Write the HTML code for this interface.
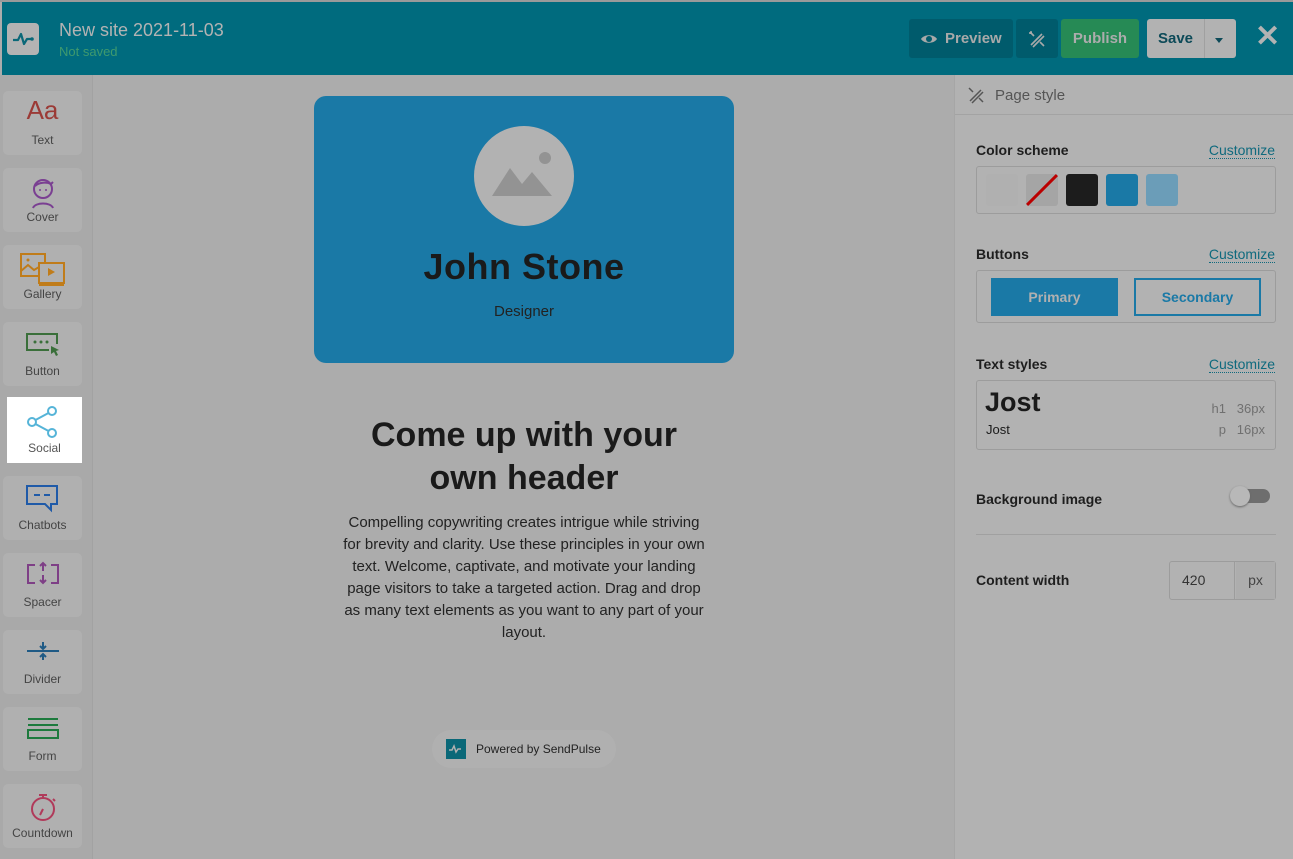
<!DOCTYPE html>
<html><head><meta charset="utf-8"><style>
*{box-sizing:border-box;margin:0;padding:0}
body{width:1293px;height:859px;overflow:hidden;background:#acacac;font-family:"Liberation Sans",sans-serif;position:relative}
.hdr{position:absolute;left:2px;top:2px;width:1291px;height:73px;background:#006b7e}
.abs{position:absolute}
.side{position:absolute;left:0;top:75px;width:93px;height:784px;background:#a9a9a9;border-right:1px solid #a2a2a2}
.tile{position:absolute;left:3px;width:79px;height:64px;background:#b0b0b0;border-radius:5px;text-align:center;font-size:12px;color:#444}
.tile svg{position:absolute;left:22px;top:8px}
.tile span{position:absolute;left:0;right:0;top:42px}
.panel{position:absolute;left:954px;top:75px;width:339px;height:784px;background:#b2b2b2;border-left:1px solid #a6a6a6}
.lbl{position:absolute;left:21px;font-size:14px;font-weight:bold;color:#1e1e1e}
.cust{position:absolute;right:18px;font-size:14px;color:#0f6a7e;border-bottom:1px dotted #0f6a7e;line-height:16px}
.box{position:absolute;left:21px;width:300px;border:1px solid #9c9c9c;border-radius:3px}
</style></head><body>
<div class="abs" style="left:0;top:0;width:1293px;height:2px;background:#9a9a9a"></div>
<div class="hdr">
 <div class="abs" style="left:5px;top:21px;width:32px;height:32px;background:#b3b3b3;border-radius:4px">
  <svg width="32" height="32" viewBox="0 0 32 32"><path d="M6 17h5l3-6 3 10 3-5h4" fill="none" stroke="#0a6878" stroke-width="2.2" stroke-linejoin="round"/><circle cx="25" cy="16" r="1.8" fill="#0a6878"/></svg>
 </div>
 <div class="abs" style="left:57px;top:18px;font-size:18px;color:#b3b3b3">New site 2021-11-03</div>
 <div class="abs" style="left:57px;top:42px;font-size:13px;color:#3f9a6e">Not saved</div>
 <div class="abs" style="left:907px;top:17px;width:104px;height:39px;background:#005b6c;border-radius:3px;color:#a9a9a9;font-weight:bold;font-size:15px;line-height:39px;padding-left:36px">Preview</div>
 <svg class="abs" style="left:918px;top:30px" width="18" height="14" viewBox="0 0 18 14"><path d="M1 7C4 2 14 2 17 7C14 12 4 12 1 7Z" fill="#a9a9a9"/><circle cx="9" cy="7" r="3" fill="#005b6c"/></svg>
 <div class="abs" style="left:1014px;top:17px;width:42px;height:39px;background:#005b6c;border-radius:3px"></div>
 <svg class="abs" style="left:1026px;top:28px" width="18" height="18" viewBox="0 0 18 18"><path d="M3 15L14 4M5 17L16 6M2 2l4 4M12 12l4 4M2 2l2 0M2 2l0 2" stroke="#a9a9a9" stroke-width="1.6" fill="none"/></svg>
 <div class="abs" style="left:1059px;top:17px;width:78px;height:39px;background:#268a55;border-radius:3px;color:#acacac;font-weight:bold;font-size:15px;line-height:39px;text-align:center">Publish</div>
 <div class="abs" style="left:1145px;top:17px;width:89px;height:39px;background:#b2b2b2;border-radius:3px"></div>
 <div class="abs" style="left:1145px;top:17px;width:58px;height:39px;color:#0d4a58;font-weight:bold;font-size:15px;line-height:39px;text-align:center;border-right:1px solid #a0a0a0">Save</div>
 <div class="abs" style="left:1213px;top:36px;border:4px solid transparent;border-top:5px solid #0d4a58"></div>
 <div class="abs" style="left:1253px;top:20px;font-size:30px;color:#b3b3b3;font-weight:bold;line-height:30px">✕</div>
</div>

<div class="side">
 <div class="tile" style="top:16px"><div style="position:absolute;left:0;right:0;top:4px;font-size:26px;color:#9b3a36">Aa</div><span>Text</span></div>
 <div class="tile" style="top:93px"><svg width="36" height="34" viewBox="0 0 36 34"><circle cx="18" cy="13" r="9" fill="none" stroke="#7a3f92" stroke-width="2"/><path d="M10 10c4-4 12-4 16-2l2-2" stroke="#7a3f92" stroke-width="2" fill="none"/><circle cx="15" cy="14" r="1" fill="#7a3f92"/><circle cx="21" cy="14" r="1" fill="#7a3f92"/><path d="M8 32c2-6 18-6 20 0" stroke="#7a3f92" stroke-width="2" fill="none"/></svg><span>Cover</span></div>
 <div class="tile" style="top:170px"><svg width="46" height="34" viewBox="0 0 46 34" style="left:17px"><rect x="1" y="1" width="24" height="22" fill="none" stroke="#c07c1a" stroke-width="2"/><path d="M1 18l7-6 6 5 5-3 6 4" stroke="#c07c1a" stroke-width="2" fill="none"/><circle cx="8" cy="7" r="1.5" fill="#c07c1a"/><rect x="19" y="10" width="25" height="20" fill="#b0b0b0" stroke="#c07c1a" stroke-width="2"/><path d="M28 15v8l7-4z" fill="#c07c1a"/><path d="M19 32h25" stroke="#c07c1a" stroke-width="2"/></svg><span>Gallery</span></div>
 <div class="tile" style="top:247px"><svg width="36" height="34" viewBox="0 0 36 34"><path d="M24 20H2V4h30v10" fill="none" stroke="#3a6f3a" stroke-width="2"/><circle cx="10" cy="12" r="1.5" fill="#3a6f3a"/><circle cx="16" cy="12" r="1.5" fill="#3a6f3a"/><circle cx="22" cy="12" r="1.5" fill="#3a6f3a"/><path d="M26 16l8 4-3 1 2 4-2 1-2-4-3 2z" fill="#3a6f3a"/></svg><span>Button</span></div>
 <div class="tile" style="top:322px;left:7px;width:75px;height:66px;background:#fff;border-radius:0"><svg width="32" height="34" viewBox="0 0 32 34" style="left:19px"><circle cx="6" cy="17" r="4" fill="none" stroke="#55b4d8" stroke-width="2"/><circle cx="26" cy="6" r="4" fill="none" stroke="#55b4d8" stroke-width="2"/><circle cx="26" cy="28" r="4" fill="none" stroke="#55b4d8" stroke-width="2"/><path d="M9.5 15l13-7M9.5 19l13 7" stroke="#55b4d8" stroke-width="2"/></svg><span style="color:#555;top:44px">Social</span></div>
 <div class="tile" style="top:401px"><svg width="36" height="34" viewBox="0 0 36 34"><path d="M2 2h30v18h-6v6l-6-6H2z" fill="none" stroke="#1f5aa8" stroke-width="2"/><path d="M9 11h6M19 11h6" stroke="#1f5aa8" stroke-width="2"/></svg><span>Chatbots</span></div>
 <div class="tile" style="top:478px"><svg width="36" height="34" viewBox="0 0 36 34"><path d="M10 4H3v18h7M26 4h7v18h-7M18 2v8M18 14v8M15 5l3-3 3 3M15 19l3 3 3-3" fill="none" stroke="#7e3f86" stroke-width="2"/></svg><span>Spacer</span></div>
 <div class="tile" style="top:555px"><svg width="36" height="34" viewBox="0 0 36 34"><path d="M2 13h32M18 4v6M18 16v6M15 8l3 3 3-3M15 19l3-3 3 3" fill="none" stroke="#1f5a85" stroke-width="2"/></svg><span>Divider</span></div>
 <div class="tile" style="top:632px"><svg width="36" height="34" viewBox="0 0 36 34"><path d="M3 4h30M3 10h30" stroke="#1d7a3d" stroke-width="2"/><rect x="3" y="15" width="30" height="8" fill="none" stroke="#1d7a3d" stroke-width="2"/></svg><span>Form</span></div>
 <div class="tile" style="top:709px"><svg width="36" height="34" viewBox="0 0 36 34"><circle cx="18" cy="17" r="11" fill="none" stroke="#b03a5a" stroke-width="2"/><path d="M14 3h8M18 3v3M18 17l-3 6M28 7l2 2" stroke="#b03a5a" stroke-width="2" fill="none"/></svg><span>Countdown</span></div>
</div>

<div class="abs" style="left:314px;top:96px;width:420px;height:267px;background:#1a79a6;border-radius:12px">
 <div class="abs" style="left:160px;top:30px;width:100px;height:100px;border-radius:50%;background:#b2b2b2">
  <svg width="100" height="100" viewBox="0 0 100 100"><path d="M18 70l18-28 12 16 10-12 20 24z" fill="#939393"/><circle cx="71" cy="32" r="6" fill="#939393"/></svg>
 </div>
 <div class="abs" style="left:0;right:0;top:150px;text-align:center;font-size:36px;font-weight:bold;color:#1a1a1a;letter-spacing:0.5px">John Stone</div>
 <div class="abs" style="left:0;right:0;top:207px;text-align:center;font-size:15px;color:#222">Designer</div>
</div>
<div class="abs" style="left:314px;width:420px;top:414px;text-align:center;font-size:34px;font-weight:bold;color:#1a1a1a;line-height:43px">Come up with your<br>own header</div>
<div class="abs" style="left:340px;width:368px;top:512px;text-align:center;font-size:15px;color:#222;line-height:22px">Compelling copywriting creates intrigue while striving for brevity and clarity. Use these principles in your own text. Welcome, captivate, and motivate your landing page visitors to take a targeted action. Drag and drop as many text elements as you want to any part of your layout.</div>
<div class="abs" style="left:432px;top:730px;width:184px;height:38px;background:#b0b0b0;border-radius:19px;font-size:12px;color:#222;line-height:38px;padding-left:44px">Powered by SendPulse</div>
<div class="abs" style="left:446px;top:739px;width:20px;height:20px;background:#0a6878"><svg width="20" height="20" viewBox="0 0 20 20"><path d="M3 11h3l2-4 2 6 2-3h3" fill="none" stroke="#b0b0b0" stroke-width="1.5"/></svg></div>

<div class="panel">
 <div class="abs" style="left:0;top:0;width:339px;height:40px;border-bottom:1px solid #a3a3a3"></div>
 <svg class="abs" style="left:12px;top:11px" width="18" height="18" viewBox="0 0 18 18"><path d="M3 15L14 4M5 17L16 6M2 2l4 4M12 12l4 4" stroke="#555" stroke-width="1.5" fill="none"/></svg>
 <div class="abs" style="left:40px;top:12px;font-size:15px;color:#555">Page style</div>
 <div class="lbl" style="top:67px">Color scheme</div><div class="cust" style="top:67px">Customize</div>
 <div class="box" style="top:91px;height:48px">
  <div class="abs" style="left:9px;top:7px;width:32px;height:32px;background:#b0b0b0;border-radius:3px"></div>
  <div class="abs" style="left:49px;top:7px;width:32px;height:32px;background:#a5a5a5;border-radius:3px;overflow:hidden"><svg width="32" height="32"><path d="M1 31L31 1" stroke="#b00" stroke-width="3"/></svg></div>
  <div class="abs" style="left:89px;top:7px;width:32px;height:32px;background:#1c1c1c;border-radius:3px"></div>
  <div class="abs" style="left:129px;top:7px;width:32px;height:32px;background:#1a79a6;border-radius:3px"></div>
  <div class="abs" style="left:169px;top:7px;width:32px;height:32px;background:#6b9db8;border-radius:3px"></div>
 </div>
 <div class="lbl" style="top:171px">Buttons</div><div class="cust" style="top:171px">Customize</div>
 <div class="box" style="top:195px;height:53px">
  <div class="abs" style="left:14px;top:7px;width:127px;height:38px;background:#1a79a6;color:#b0b0b0;font-weight:bold;font-size:14px;text-align:center;line-height:38px">Primary</div>
  <div class="abs" style="left:157px;top:7px;width:127px;height:38px;border:2px solid #1a79a6;color:#1a79a6;font-weight:bold;font-size:14px;text-align:center;line-height:34px">Secondary</div>
 </div>
 <div class="lbl" style="top:281px">Text styles</div><div class="cust" style="top:281px">Customize</div>
 <div class="box" style="top:305px;height:70px">
  <div class="abs" style="left:8px;top:6px;font-size:27px;font-weight:bold;color:#1a1a1a">Jost</div>
  <div class="abs" style="left:9px;top:41px;font-size:13px;color:#1a1a1a">Jost</div>
  <div class="abs" style="right:10px;top:20px;font-size:13px;color:#707070">h1&nbsp;&nbsp; 36px</div>
  <div class="abs" style="right:10px;top:41px;font-size:13px;color:#707070">p&nbsp;&nbsp; 16px</div>
 </div>
 <div class="lbl" style="top:416px">Background image</div>
 <div class="abs" style="left:277px;top:414px;width:38px;height:14px;border-radius:7px;background:#6e6e6e"></div>
 <div class="abs" style="left:275px;top:411px;width:20px;height:20px;border-radius:50%;background:#b8b8b8;box-shadow:0 1px 2px #666"></div>
 <div class="abs" style="left:21px;top:459px;width:300px;height:1px;background:#a0a0a0"></div>
 <div class="lbl" style="top:497px">Content width</div>
 <div class="abs" style="left:214px;top:486px;width:107px;height:39px;border:1px solid #9c9c9c;border-radius:3px">
  <div class="abs" style="left:0;top:0;width:65px;height:37px;border-right:1px solid #9c9c9c;font-size:14px;color:#333;line-height:37px;padding-left:12px">420</div>
  <div class="abs" style="left:66px;top:0;width:39px;height:37px;background:#adadad;font-size:14px;color:#444;line-height:37px;text-align:center">px</div>
 </div>
</div>
</body></html>
